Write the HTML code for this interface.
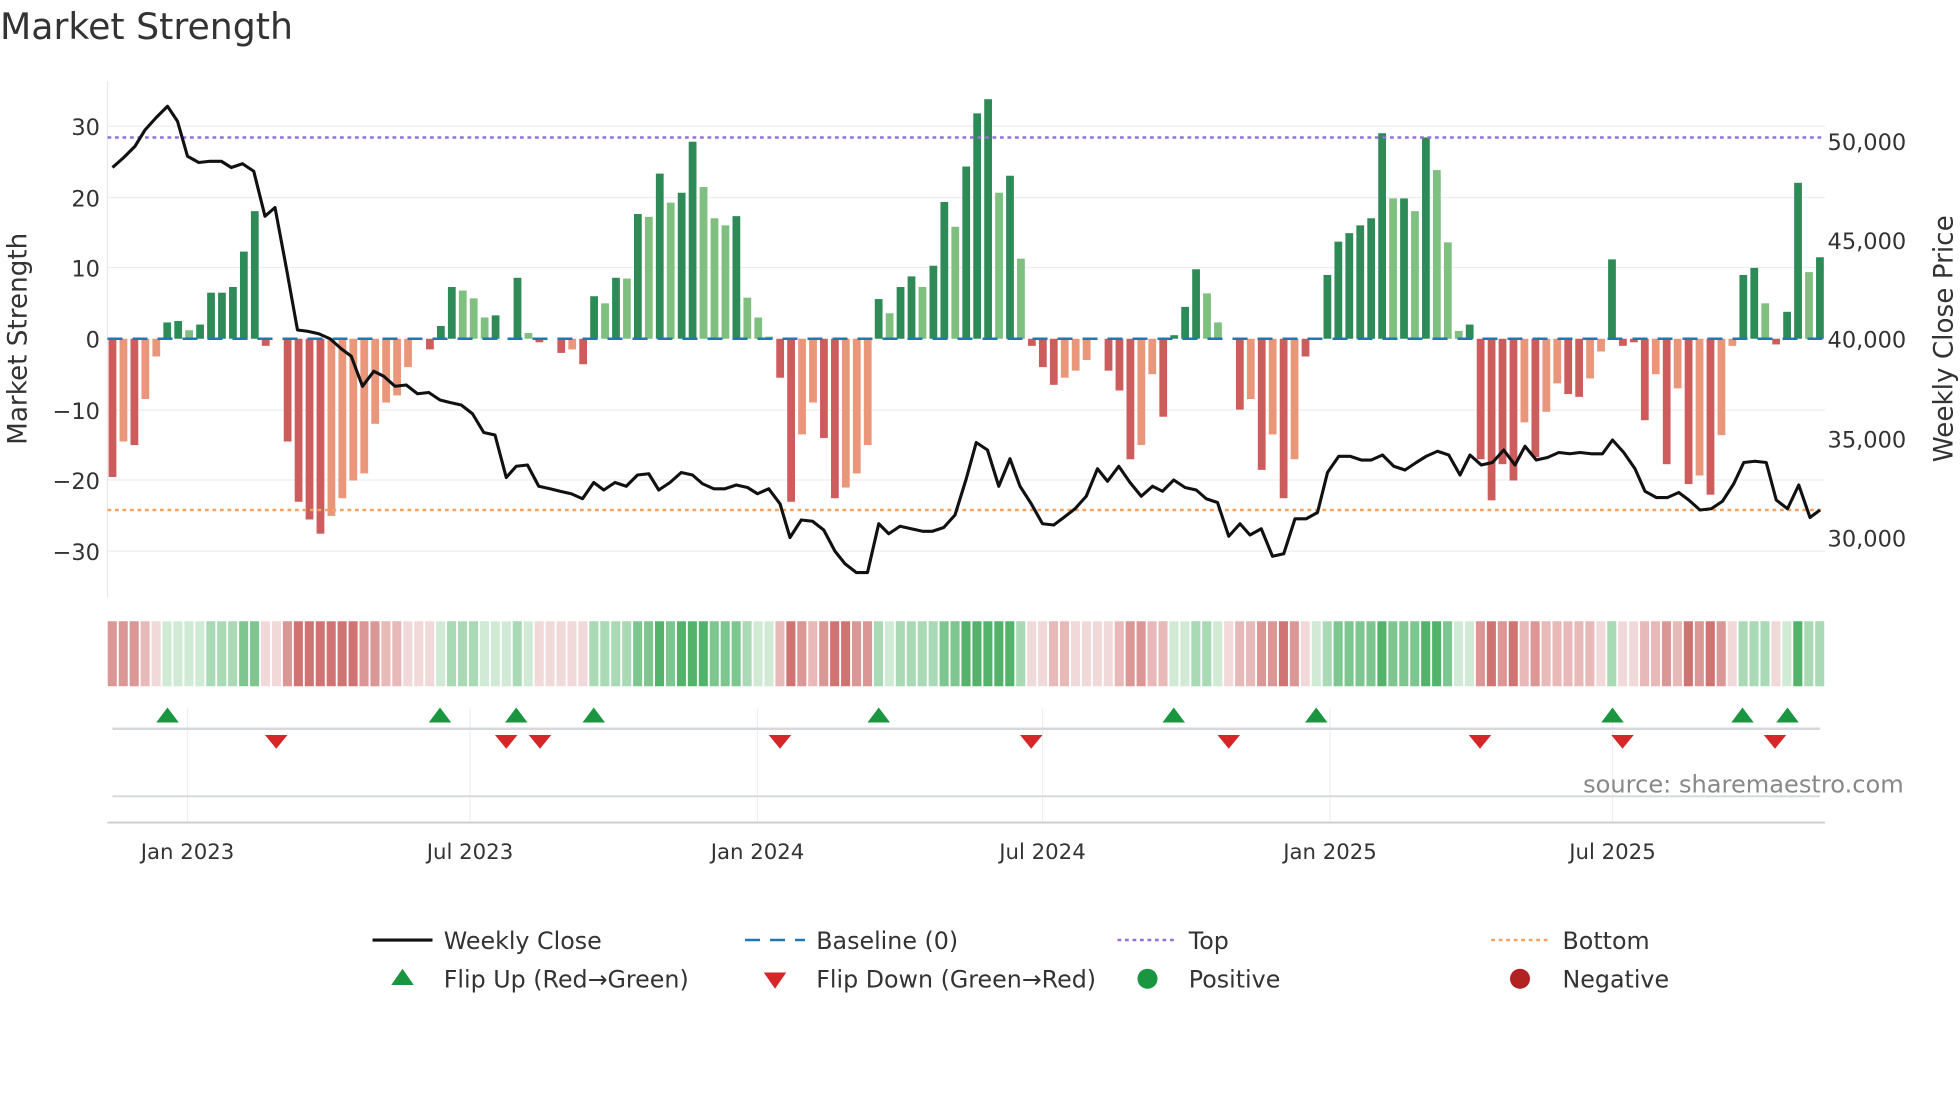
<!DOCTYPE html>
<html><head><meta charset="utf-8"><style>
html,body{margin:0;padding:0;background:#fff;width:1960px;height:1102px;overflow:hidden}
svg{display:block;font-family:"DejaVu Sans","Liberation Sans",sans-serif}
.a{fill:#2e8b57}.b{fill:#7fbf7f}.c{fill:#cd5c5c}.d{fill:#e9967a}
.g1{fill:rgba(40,160,70,.22)}.g2{fill:rgba(40,160,70,.4)}.g3{fill:rgba(40,160,70,.6)}.g4{fill:rgba(40,160,70,.8)}
.r1{fill:rgba(195,80,80,.22)}.r2{fill:rgba(195,80,80,.4)}.r3{fill:rgba(195,80,80,.6)}.r4{fill:rgba(195,80,80,.8)}
</style></head><body>
<svg width="1960" height="1102" viewBox="0 0 1568 881.6" xmlns="http://www.w3.org/2000/svg">
<text x="0" y="31" font-size="29" fill="#333">Market Strength</text>
<g stroke="#eeeeee" stroke-width="1">
<line x1="86" y1="101" x2="1460" y2="101"/><line x1="86" y1="158" x2="1460" y2="158"/><line x1="86" y1="214" x2="1460" y2="214"/>
<line x1="86" y1="328" x2="1460" y2="328"/><line x1="86" y1="384" x2="1460" y2="384"/><line x1="86" y1="441" x2="1460" y2="441"/>
<line x1="150" y1="567" x2="150" y2="658"/><line x1="376" y1="567" x2="376" y2="658"/><line x1="606" y1="567" x2="606" y2="658"/>
<line x1="834" y1="567" x2="834" y2="658"/><line x1="1064" y1="567" x2="1064" y2="658"/><line x1="1290" y1="567" x2="1290" y2="658"/>
</g>
<line x1="86" y1="65" x2="86" y2="478" stroke="#e8e8e8"/>
<g font-size="18" fill="#333" text-anchor="end">
<text x="80" y="108">30</text><text x="80" y="165">20</text><text x="80" y="221">10</text><text x="80" y="278">0</text>
<text x="80" y="335">−10</text><text x="80" y="391">−20</text><text x="80" y="448">−30</text>
</g>
<g font-size="18" fill="#333">
<text x="1462" y="120">50,000</text><text x="1462" y="199">45,000</text><text x="1462" y="278">40,000</text>
<text x="1462" y="358">35,000</text><text x="1462" y="437">30,000</text>
</g>
<text transform="translate(21,271) rotate(-90)" font-size="21" fill="#333" text-anchor="middle">Market Strength</text>
<text transform="translate(1562,271) rotate(-90)" font-size="21" fill="#333" text-anchor="middle">Weekly Close Price</text>
<g transform="translate(86.9,271) scale(8.756,-5.67)">
<rect x="0" y="-19.5" width=".71" height="19.5" class="c"/>
<rect x="1" y="-14.5" width=".71" height="14.5" class="d"/>
<rect x="2" y="-15" width=".71" height="15" class="c"/>
<rect x="3" y="-8.5" width=".71" height="8.5" class="d"/>
<rect x="4" y="-2.5" width=".71" height="2.5" class="d"/>
<rect x="5" y="0" width=".71" height="2.3" class="a"/>
<rect x="6" y="0" width=".71" height="2.5" class="a"/>
<rect x="7" y="0" width=".71" height="1.2" class="b"/>
<rect x="8" y="0" width=".71" height="2" class="a"/>
<rect x="9" y="0" width=".71" height="6.5" class="a"/>
<rect x="10" y="0" width=".71" height="6.5" class="a"/>
<rect x="11" y="0" width=".71" height="7.3" class="a"/>
<rect x="12" y="0" width=".71" height="12.3" class="a"/>
<rect x="13" y="0" width=".71" height="18" class="a"/>
<rect x="14" y="-1" width=".71" height="1" class="c"/>
<rect x="16" y="-14.5" width=".71" height="14.5" class="c"/>
<rect x="17" y="-23" width=".71" height="23" class="c"/>
<rect x="18" y="-25.5" width=".71" height="25.5" class="c"/>
<rect x="19" y="-27.5" width=".71" height="27.5" class="c"/>
<rect x="20" y="-25" width=".71" height="25" class="d"/>
<rect x="21" y="-22.5" width=".71" height="22.5" class="d"/>
<rect x="22" y="-20" width=".71" height="20" class="d"/>
<rect x="23" y="-19" width=".71" height="19" class="d"/>
<rect x="24" y="-12" width=".71" height="12" class="d"/>
<rect x="25" y="-9" width=".71" height="9" class="d"/>
<rect x="26" y="-8" width=".71" height="8" class="d"/>
<rect x="27" y="-4" width=".71" height="4" class="d"/>
<rect x="29" y="-1.5" width=".71" height="1.5" class="c"/>
<rect x="30" y="0" width=".71" height="1.8" class="a"/>
<rect x="31" y="0" width=".71" height="7.3" class="a"/>
<rect x="32" y="0" width=".71" height="6.8" class="b"/>
<rect x="33" y="0" width=".71" height="5.7" class="b"/>
<rect x="34" y="0" width=".71" height="3" class="b"/>
<rect x="35" y="0" width=".71" height="3.3" class="a"/>
<rect x="37" y="0" width=".71" height="8.6" class="a"/>
<rect x="38" y="0" width=".71" height="0.8" class="b"/>
<rect x="39" y="-0.5" width=".71" height="0.5" class="c"/>
<rect x="41" y="-2" width=".71" height="2" class="c"/>
<rect x="42" y="-1.5" width=".71" height="1.5" class="d"/>
<rect x="43" y="-3.6" width=".71" height="3.6" class="c"/>
<rect x="44" y="0" width=".71" height="6" class="a"/>
<rect x="45" y="0" width=".71" height="5" class="b"/>
<rect x="46" y="0" width=".71" height="8.6" class="a"/>
<rect x="47" y="0" width=".71" height="8.5" class="b"/>
<rect x="48" y="0" width=".71" height="17.6" class="a"/>
<rect x="49" y="0" width=".71" height="17.2" class="b"/>
<rect x="50" y="0" width=".71" height="23.3" class="a"/>
<rect x="51" y="0" width=".71" height="19.2" class="b"/>
<rect x="52" y="0" width=".71" height="20.6" class="a"/>
<rect x="53" y="0" width=".71" height="27.8" class="a"/>
<rect x="54" y="0" width=".71" height="21.4" class="b"/>
<rect x="55" y="0" width=".71" height="17" class="b"/>
<rect x="56" y="0" width=".71" height="16" class="b"/>
<rect x="57" y="0" width=".71" height="17.3" class="a"/>
<rect x="58" y="0" width=".71" height="5.8" class="b"/>
<rect x="59" y="0" width=".71" height="3" class="b"/>
<rect x="60" y="0" width=".71" height="0.3" class="b"/>
<rect x="61" y="-5.5" width=".71" height="5.5" class="c"/>
<rect x="62" y="-23" width=".71" height="23" class="c"/>
<rect x="63" y="-13.5" width=".71" height="13.5" class="d"/>
<rect x="64" y="-9" width=".71" height="9" class="d"/>
<rect x="65" y="-14" width=".71" height="14" class="c"/>
<rect x="66" y="-22.5" width=".71" height="22.5" class="c"/>
<rect x="67" y="-21" width=".71" height="21" class="d"/>
<rect x="68" y="-19" width=".71" height="19" class="d"/>
<rect x="69" y="-15" width=".71" height="15" class="d"/>
<rect x="70" y="0" width=".71" height="5.6" class="a"/>
<rect x="71" y="0" width=".71" height="3.6" class="b"/>
<rect x="72" y="0" width=".71" height="7.3" class="a"/>
<rect x="73" y="0" width=".71" height="8.8" class="a"/>
<rect x="74" y="0" width=".71" height="7.3" class="b"/>
<rect x="75" y="0" width=".71" height="10.3" class="a"/>
<rect x="76" y="0" width=".71" height="19.3" class="a"/>
<rect x="77" y="0" width=".71" height="15.8" class="b"/>
<rect x="78" y="0" width=".71" height="24.3" class="a"/>
<rect x="79" y="0" width=".71" height="31.8" class="a"/>
<rect x="80" y="0" width=".71" height="33.8" class="a"/>
<rect x="81" y="0" width=".71" height="20.6" class="b"/>
<rect x="82" y="0" width=".71" height="23" class="a"/>
<rect x="83" y="0" width=".71" height="11.3" class="b"/>
<rect x="84" y="-1" width=".71" height="1" class="c"/>
<rect x="85" y="-4" width=".71" height="4" class="c"/>
<rect x="86" y="-6.5" width=".71" height="6.5" class="c"/>
<rect x="87" y="-5.5" width=".71" height="5.5" class="d"/>
<rect x="88" y="-4.5" width=".71" height="4.5" class="d"/>
<rect x="89" y="-3" width=".71" height="3" class="d"/>
<rect x="91" y="-4.5" width=".71" height="4.5" class="c"/>
<rect x="92" y="-7.3" width=".71" height="7.3" class="c"/>
<rect x="93" y="-17" width=".71" height="17" class="c"/>
<rect x="94" y="-15" width=".71" height="15" class="d"/>
<rect x="95" y="-5" width=".71" height="5" class="d"/>
<rect x="96" y="-11" width=".71" height="11" class="c"/>
<rect x="97" y="0" width=".71" height="0.5" class="a"/>
<rect x="98" y="0" width=".71" height="4.5" class="a"/>
<rect x="99" y="0" width=".71" height="9.8" class="a"/>
<rect x="100" y="0" width=".71" height="6.4" class="b"/>
<rect x="101" y="0" width=".71" height="2.3" class="b"/>
<rect x="103" y="-10" width=".71" height="10" class="c"/>
<rect x="104" y="-8.5" width=".71" height="8.5" class="d"/>
<rect x="105" y="-18.5" width=".71" height="18.5" class="c"/>
<rect x="106" y="-13.5" width=".71" height="13.5" class="d"/>
<rect x="107" y="-22.5" width=".71" height="22.5" class="c"/>
<rect x="108" y="-17" width=".71" height="17" class="d"/>
<rect x="109" y="-2.5" width=".71" height="2.5" class="c"/>
<rect x="111" y="0" width=".71" height="9" class="a"/>
<rect x="112" y="0" width=".71" height="13.7" class="a"/>
<rect x="113" y="0" width=".71" height="14.9" class="a"/>
<rect x="114" y="0" width=".71" height="16" class="a"/>
<rect x="115" y="0" width=".71" height="17" class="a"/>
<rect x="116" y="0" width=".71" height="29" class="a"/>
<rect x="117" y="0" width=".71" height="19.8" class="b"/>
<rect x="118" y="0" width=".71" height="19.8" class="a"/>
<rect x="119" y="0" width=".71" height="18" class="b"/>
<rect x="120" y="0" width=".71" height="28.4" class="a"/>
<rect x="121" y="0" width=".71" height="23.8" class="b"/>
<rect x="122" y="0" width=".71" height="13.6" class="b"/>
<rect x="123" y="0" width=".71" height="1.1" class="b"/>
<rect x="124" y="0" width=".71" height="2" class="a"/>
<rect x="125" y="-17" width=".71" height="17" class="c"/>
<rect x="126" y="-22.8" width=".71" height="22.8" class="c"/>
<rect x="127" y="-17.7" width=".71" height="17.7" class="c"/>
<rect x="128" y="-20" width=".71" height="20" class="c"/>
<rect x="129" y="-11.8" width=".71" height="11.8" class="d"/>
<rect x="130" y="-16.7" width=".71" height="16.7" class="c"/>
<rect x="131" y="-10.3" width=".71" height="10.3" class="d"/>
<rect x="132" y="-6.3" width=".71" height="6.3" class="d"/>
<rect x="133" y="-7.8" width=".71" height="7.8" class="c"/>
<rect x="134" y="-8.2" width=".71" height="8.2" class="c"/>
<rect x="135" y="-5.6" width=".71" height="5.6" class="d"/>
<rect x="136" y="-1.8" width=".71" height="1.8" class="d"/>
<rect x="137" y="0" width=".71" height="11.2" class="a"/>
<rect x="138" y="-1" width=".71" height="1" class="c"/>
<rect x="139" y="-0.5" width=".71" height="0.5" class="c"/>
<rect x="140" y="-11.5" width=".71" height="11.5" class="c"/>
<rect x="141" y="-5" width=".71" height="5" class="d"/>
<rect x="142" y="-17.7" width=".71" height="17.7" class="c"/>
<rect x="143" y="-7" width=".71" height="7" class="d"/>
<rect x="144" y="-20.5" width=".71" height="20.5" class="c"/>
<rect x="145" y="-19.3" width=".71" height="19.3" class="d"/>
<rect x="146" y="-22" width=".71" height="22" class="c"/>
<rect x="147" y="-13.6" width=".71" height="13.6" class="d"/>
<rect x="148" y="-1" width=".71" height="1" class="d"/>
<rect x="149" y="0" width=".71" height="9" class="a"/>
<rect x="150" y="0" width=".71" height="10" class="a"/>
<rect x="151" y="0" width=".71" height="5" class="b"/>
<rect x="152" y="-0.8" width=".71" height="0.8" class="c"/>
<rect x="153" y="0" width=".71" height="3.8" class="a"/>
<rect x="154" y="0" width=".71" height="22" class="a"/>
<rect x="155" y="0" width=".71" height="9.4" class="b"/>
<rect x="156" y="0" width=".71" height="11.5" class="a"/>
</g>
<line x1="86" y1="271" x2="1460" y2="271" stroke="#1f77b4" stroke-width="2" stroke-dasharray="12,8"/>
<line x1="86" y1="110" x2="1460" y2="110" stroke="#9370db" stroke-width="2" stroke-dasharray="3,3"/>
<line x1="86" y1="408" x2="1460" y2="408" stroke="#f4a460" stroke-width="2" stroke-dasharray="3,3"/>
<polyline fill="none" stroke="#111" stroke-width="2.5" stroke-linejoin="round" points="90,134 99,126 108,117 116,104 125,94 134,85 142,97 150,125 159,130 168,129 177,129 185,134 194,131 203,137 212,173 220,166 229,214 238,264 246,265 255,267 264,271 273,279 281,285 290,309 299,297 307,301 316,309 325,308 334,315 343,314 352,320 360,322 369,324 378,331 387,346 396,348 405,382 413,373 422,372 431,389 440,391 448,393 457,395 466,399 475,386 483,392 492,386 501,389 510,380 519,379 527,392 536,386 545,378 554,380 562,387 571,391 580,391 589,388 598,390 606,395 615,391 624,403 632,430 641,416 650,417 659,424 668,441 676,451 685,458 694,458 703,419 711,427 720,421 729,423 738,425 746,425 755,422 764,412 773,383 781,354 790,360 799,389 808,367 816,389 825,403 834,419 843,420 851,414 860,407 869,397 878,375 886,385 895,373 904,386 913,397 922,389 930,393 939,384 948,390 957,392 965,399 974,402 983,429 992,419 1000,428 1009,423 1018,445 1027,443 1036,415 1045,415 1054,410 1062,378 1071,365 1080,365 1089,368 1097,368 1106,364 1115,373 1124,376 1133,370 1141,365 1150,361 1159,364 1168,380 1176,364 1185,372 1194,370 1203,360 1212,372 1220,357 1229,368 1238,366 1247,362 1256,363 1264,362 1273,363 1282,363 1290,352 1299,362 1308,375 1316,393 1325,398 1334,398 1343,394 1351,400 1360,408 1369,407 1378,401 1387,387 1395,370 1404,369 1413,370 1421,400 1430,407 1439,388 1448,414 1456,408"/>
<g transform="translate(86.2,497) scale(8.756,1)">
<rect x="0" width=".83" height="52" class="r3"/><rect x="1" width=".83" height="52" class="r3"/><rect x="2" width=".83" height="52" class="r3"/><rect x="3" width=".83" height="52" class="r2"/><rect x="4" width=".83" height="52" class="r1"/>
<rect x="5" width=".83" height="52" class="g1"/><rect x="6" width=".83" height="52" class="g1"/><rect x="7" width=".83" height="52" class="g1"/><rect x="8" width=".83" height="52" class="g1"/><rect x="9" width=".83" height="52" class="g2"/>
<rect x="10" width=".83" height="52" class="g2"/><rect x="11" width=".83" height="52" class="g2"/><rect x="12" width=".83" height="52" class="g3"/><rect x="13" width=".83" height="52" class="g3"/><rect x="14" width=".83" height="52" class="r1"/>
<rect x="15" width=".83" height="52" class="r1"/><rect x="16" width=".83" height="52" class="r3"/><rect x="17" width=".83" height="52" class="r4"/><rect x="18" width=".83" height="52" class="r4"/><rect x="19" width=".83" height="52" class="r4"/>
<rect x="20" width=".83" height="52" class="r4"/><rect x="21" width=".83" height="52" class="r4"/><rect x="22" width=".83" height="52" class="r4"/><rect x="23" width=".83" height="52" class="r3"/><rect x="24" width=".83" height="52" class="r3"/>
<rect x="25" width=".83" height="52" class="r2"/><rect x="26" width=".83" height="52" class="r2"/><rect x="27" width=".83" height="52" class="r1"/><rect x="28" width=".83" height="52" class="r1"/><rect x="29" width=".83" height="52" class="r1"/>
<rect x="30" width=".83" height="52" class="g1"/><rect x="31" width=".83" height="52" class="g2"/><rect x="32" width=".83" height="52" class="g2"/><rect x="33" width=".83" height="52" class="g2"/><rect x="34" width=".83" height="52" class="g1"/>
<rect x="35" width=".83" height="52" class="g1"/><rect x="36" width=".83" height="52" class="g1"/><rect x="37" width=".83" height="52" class="g2"/><rect x="38" width=".83" height="52" class="g1"/><rect x="39" width=".83" height="52" class="r1"/>
<rect x="40" width=".83" height="52" class="r1"/><rect x="41" width=".83" height="52" class="r1"/><rect x="42" width=".83" height="52" class="r1"/><rect x="43" width=".83" height="52" class="r1"/><rect x="44" width=".83" height="52" class="g2"/>
<rect x="45" width=".83" height="52" class="g2"/><rect x="46" width=".83" height="52" class="g2"/><rect x="47" width=".83" height="52" class="g2"/><rect x="48" width=".83" height="52" class="g3"/><rect x="49" width=".83" height="52" class="g3"/>
<rect x="50" width=".83" height="52" class="g4"/><rect x="51" width=".83" height="52" class="g3"/><rect x="52" width=".83" height="52" class="g4"/><rect x="53" width=".83" height="52" class="g4"/><rect x="54" width=".83" height="52" class="g4"/>
<rect x="55" width=".83" height="52" class="g3"/><rect x="56" width=".83" height="52" class="g3"/><rect x="57" width=".83" height="52" class="g3"/><rect x="58" width=".83" height="52" class="g2"/><rect x="59" width=".83" height="52" class="g1"/>
<rect x="60" width=".83" height="52" class="g1"/><rect x="61" width=".83" height="52" class="r2"/><rect x="62" width=".83" height="52" class="r4"/><rect x="63" width=".83" height="52" class="r3"/><rect x="64" width=".83" height="52" class="r2"/>
<rect x="65" width=".83" height="52" class="r3"/><rect x="66" width=".83" height="52" class="r4"/><rect x="67" width=".83" height="52" class="r4"/><rect x="68" width=".83" height="52" class="r3"/><rect x="69" width=".83" height="52" class="r3"/>
<rect x="70" width=".83" height="52" class="g2"/><rect x="71" width=".83" height="52" class="g1"/><rect x="72" width=".83" height="52" class="g2"/><rect x="73" width=".83" height="52" class="g2"/><rect x="74" width=".83" height="52" class="g2"/>
<rect x="75" width=".83" height="52" class="g2"/><rect x="76" width=".83" height="52" class="g3"/><rect x="77" width=".83" height="52" class="g3"/><rect x="78" width=".83" height="52" class="g4"/><rect x="79" width=".83" height="52" class="g4"/>
<rect x="80" width=".83" height="52" class="g4"/><rect x="81" width=".83" height="52" class="g4"/><rect x="82" width=".83" height="52" class="g4"/><rect x="83" width=".83" height="52" class="g2"/><rect x="84" width=".83" height="52" class="r1"/>
<rect x="85" width=".83" height="52" class="r1"/><rect x="86" width=".83" height="52" class="r2"/><rect x="87" width=".83" height="52" class="r2"/><rect x="88" width=".83" height="52" class="r1"/><rect x="89" width=".83" height="52" class="r1"/>
<rect x="90" width=".83" height="52" class="r1"/><rect x="91" width=".83" height="52" class="r1"/><rect x="92" width=".83" height="52" class="r2"/><rect x="93" width=".83" height="52" class="r3"/><rect x="94" width=".83" height="52" class="r3"/>
<rect x="95" width=".83" height="52" class="r2"/><rect x="96" width=".83" height="52" class="r2"/><rect x="97" width=".83" height="52" class="g1"/><rect x="98" width=".83" height="52" class="g1"/><rect x="99" width=".83" height="52" class="g2"/>
<rect x="100" width=".83" height="52" class="g2"/><rect x="101" width=".83" height="52" class="g1"/><rect x="102" width=".83" height="52" class="r1"/><rect x="103" width=".83" height="52" class="r2"/><rect x="104" width=".83" height="52" class="r2"/>
<rect x="105" width=".83" height="52" class="r3"/><rect x="106" width=".83" height="52" class="r3"/><rect x="107" width=".83" height="52" class="r4"/><rect x="108" width=".83" height="52" class="r3"/><rect x="109" width=".83" height="52" class="r1"/>
<rect x="110" width=".83" height="52" class="g1"/><rect x="111" width=".83" height="52" class="g2"/><rect x="112" width=".83" height="52" class="g3"/><rect x="113" width=".83" height="52" class="g3"/><rect x="114" width=".83" height="52" class="g3"/>
<rect x="115" width=".83" height="52" class="g3"/><rect x="116" width=".83" height="52" class="g4"/><rect x="117" width=".83" height="52" class="g3"/><rect x="118" width=".83" height="52" class="g3"/><rect x="119" width=".83" height="52" class="g3"/>
<rect x="120" width=".83" height="52" class="g4"/><rect x="121" width=".83" height="52" class="g4"/><rect x="122" width=".83" height="52" class="g3"/><rect x="123" width=".83" height="52" class="g1"/><rect x="124" width=".83" height="52" class="g1"/>
<rect x="125" width=".83" height="52" class="r3"/><rect x="126" width=".83" height="52" class="r4"/><rect x="127" width=".83" height="52" class="r3"/><rect x="128" width=".83" height="52" class="r4"/><rect x="129" width=".83" height="52" class="r2"/>
<rect x="130" width=".83" height="52" class="r3"/><rect x="131" width=".83" height="52" class="r2"/><rect x="132" width=".83" height="52" class="r2"/><rect x="133" width=".83" height="52" class="r2"/><rect x="134" width=".83" height="52" class="r2"/>
<rect x="135" width=".83" height="52" class="r2"/><rect x="136" width=".83" height="52" class="r1"/><rect x="137" width=".83" height="52" class="g2"/><rect x="138" width=".83" height="52" class="r1"/><rect x="139" width=".83" height="52" class="r1"/>
<rect x="140" width=".83" height="52" class="r2"/><rect x="141" width=".83" height="52" class="r2"/><rect x="142" width=".83" height="52" class="r3"/><rect x="143" width=".83" height="52" class="r2"/><rect x="144" width=".83" height="52" class="r4"/>
<rect x="145" width=".83" height="52" class="r3"/><rect x="146" width=".83" height="52" class="r4"/><rect x="147" width=".83" height="52" class="r3"/><rect x="148" width=".83" height="52" class="r1"/><rect x="149" width=".83" height="52" class="g2"/>
<rect x="150" width=".83" height="52" class="g2"/><rect x="151" width=".83" height="52" class="g2"/><rect x="152" width=".83" height="52" class="r1"/><rect x="153" width=".83" height="52" class="g1"/><rect x="154" width=".83" height="52" class="g4"/>
<rect x="155" width=".83" height="52" class="g2"/><rect x="156" width=".83" height="52" class="g2"/>
</g>
<line x1="90" y1="583" x2="1456" y2="583" stroke="#d5d8dc" stroke-width="2"/>
<line x1="90" y1="637" x2="1456" y2="637" stroke="#d5d8dc" stroke-width="1.5"/>
<line x1="86" y1="658" x2="1460" y2="658" stroke="#ccc" stroke-width="1.5"/>
<g fill="#1a9641">
<polygon points="125,578 134,566 143,578"/><polygon points="343,578 352,566 361,578"/><polygon points="404,578 413,566 422,578"/>
<polygon points="466,578 475,566 484,578"/><polygon points="694,578 703,566 712,578"/><polygon points="930,578 939,566 948,578"/>
<polygon points="1044,578 1053,566 1062,578"/><polygon points="1281,578 1290,566 1299,578"/><polygon points="1385,578 1394,566 1403,578"/>
<polygon points="1421,578 1430,566 1439,578"/>
</g>
<g fill="#d62728">
<polygon points="212,588 230,588 221,599"/><polygon points="396,588 414,588 405,599"/><polygon points="423,588 441,588 432,599"/>
<polygon points="615,588 633,588 624,599"/><polygon points="816,588 834,588 825,599"/><polygon points="974,588 992,588 983,599"/>
<polygon points="1175,588 1193,588 1184,599"/><polygon points="1289,588 1307,588 1298,599"/><polygon points="1411,588 1429,588 1420,599"/>
</g>
<text x="1523" y="634" font-size="19.3" fill="#888" text-anchor="end">source: sharemaestro.com</text>
<g font-size="17" fill="#333" text-anchor="middle">
<text x="150" y="687">Jan 2023</text><text x="376" y="687">Jul 2023</text><text x="606" y="687">Jan 2024</text>
<text x="834" y="687">Jul 2024</text><text x="1064" y="687">Jan 2025</text><text x="1290" y="687">Jul 2025</text>
</g>
<g font-size="19" fill="#333">
<line x1="298" y1="752" x2="346" y2="752" stroke="#111" stroke-width="2.5"/><text x="355" y="759">Weekly Close</text>
<line x1="596" y1="752" x2="644" y2="752" stroke="#1f77b4" stroke-width="2" stroke-dasharray="12,8"/><text x="653" y="759">Baseline (0)</text>
<line x1="894" y1="752" x2="942" y2="752" stroke="#9370db" stroke-width="2" stroke-dasharray="3,3"/><text x="951" y="759">Top</text>
<line x1="1193" y1="752" x2="1241" y2="752" stroke="#f4a460" stroke-width="2" stroke-dasharray="3,3"/><text x="1250" y="759">Bottom</text>
<polygon points="313,788 322,775 331,788" fill="#1a9641"/><text x="355" y="790">Flip Up (Red→Green)</text>
<polygon points="611,778 629,778 620,791" fill="#d62728"/><text x="653" y="790">Flip Down (Green→Red)</text>
<circle cx="918" cy="783" r="8" fill="#1a9641"/><text x="951" y="790">Positive</text>
<circle cx="1216" cy="783" r="8" fill="#b22222"/><text x="1250" y="790">Negative</text>
</g>
</svg>
</body></html>
